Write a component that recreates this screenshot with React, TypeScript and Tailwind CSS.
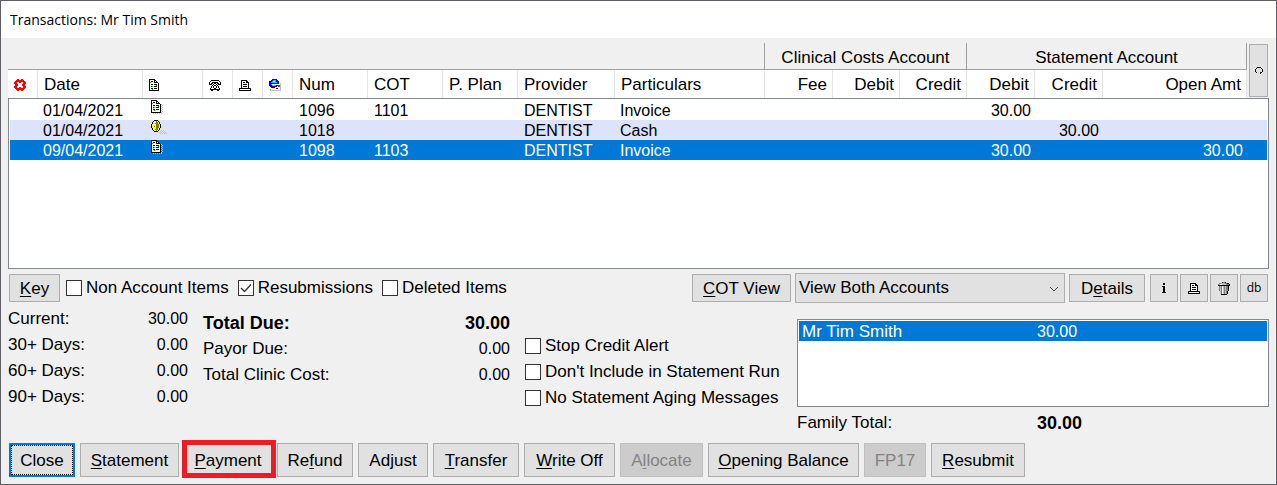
import type { ReactNode } from "react";

const palette: Record<string, string> = {
  k: "#000000",
  w: "#ffffff",
  g: "#00c000",
  s: "#c0c0c0",
  d: "#808080",
  r: "#ff0000",
  y: "#ffff00",
  o: "#808000",
  b: "#0000ff",
  n: "#000080",
  c: "#00c8ff"
};

const pixels = {
  cancel: [
    "...rr..rr...",
    "..rrrrrrrr..",
    ".rrrrrrrrrr.",
    "rrrwwrrwwrrr",
    "rrrwwwwwwrrr",
    ".rrrwwwwrrr.",
    ".rrrwwwwrrr.",
    "rrrwwwwwwrrr",
    "rrrwwrrwwrrr",
    ".rrrrrrrrrr.",
    "..rrrrrrrr..",
    "...rr..rr..."
  ],
  heading: [
    "kkkkkk....",
    "kwwwwkk...",
    "kwkkwkwk..",
    "kgwwwkkkk.",
    "kwwwwwwwwk",
    "kwkkwkkkwk",
    "kwwwwwwgwk",
    "kwkgwkkkwk",
    "kwwwwwwwwk",
    "kwkkwkkkwk",
    "kwwgwwwwwk",
    "kkkkkkkkkk"
  ],
  document: [
    "kkkkkk......",
    "kwwwwkk.....",
    "kwkkwkwk....",
    "kgwwwkkkk...",
    "kwwwwwwwwks.",
    "kwkkwkkkwk.s",
    "kwwwwwwgwks.",
    "kwkgwkkkwk.s",
    "kwwwwwwwwks.",
    "kwkkwkkkwk.s",
    "kwwgwwwwwks.",
    "kwwwwwwwwk.s",
    "kkkkkkkkkks.",
    "..s.s.s.s.s."
  ],
  coin: [
    "...kkkk.........",
    "..kyyoyk........",
    ".kywyooyk.......",
    ".kyyoooyk.......",
    "kyywyoooyk......",
    "kyyyyoooyk......",
    "kyyoyoooyk......",
    "kyyyyoooyk......",
    ".kyyyooyk.......",
    ".kyyoooyk.......",
    "..kyyoyk..s.s...",
    "...kkkk..s.s.s..",
    "........s.s.s.s.",
    ".........s.s.s.s"
  ],
  phone: [
    "..kkkkkkkk..",
    ".kwwwwwwwwk.",
    "kwwkkkkkkwwk",
    "kwkkwkkwkkwk",
    "kkk.kwwk.kkk",
    "...kwkkwk...",
    "..kwkwwkwk..",
    "..kwkwwkwk..",
    ".kwwwkkwwwk.",
    ".kkkkkkkkkk.",
    "..kk....kk.."
  ],
  printer: [
    "..kkkkkk....",
    "..kwwwwkk...",
    "..kwkkwkkk..",
    "..kwwwwwwk..",
    "..kwkkkkwk..",
    "..kwwwwwwk..",
    "..kwkkkkwk..",
    "..kwwwwwwk..",
    "kkkkkkkkkkkk",
    "kwwwwwwwwwwk",
    "kkkkkkkkkkkk"
  ],
  web: [
    "...bbbbb....",
    "..bbcccbb...",
    "nbbc..cbbn..",
    "bbccccccbb..",
    "bbbbbbbbbbws",
    "bbc.wwwwwwws",
    "nbbc.ccbbrrs",
    ".nbbbbbbwrrs",
    "..nnnnwwwwws",
    "..wyyywbbwws",
    ".cwwwwwwwwws",
    ".sssssssssss"
  ],
  info: [
    "..kk..",
    "..kk..",
    "......",
    ".kkk..",
    "..kk..",
    "..kk..",
    "..kk..",
    "..kk..",
    "..kk..",
    ".kkkk."
  ],
  bin: [
    "....kddk....",
    ".ddssssddkk.",
    "dswwssssdddk",
    "kkkkkkkkkkkk",
    ".dsdwsdsddk.",
    ".dsdwsdsddk.",
    ".dsdwsdsddk.",
    ".dsdwsdsddk.",
    ".dsdwsdsddk.",
    "..sdwsdsdk..",
    "..sdwsdsdk..",
    "..sdwsdsdk..",
    "...kkkkkk..."
  ],
  refresh: ["..kkkk..", ".k....k.", "k......k", "k......k", "k......k", ".k...kk.", ".....k.."]
};

function PixelIcon({ name }: { name: keyof typeof pixels }) {
  const rows = pixels[name];
  return (
    <svg width={rows[0].length} height={rows.length} shapeRendering="crispEdges" aria-hidden="true" className="block">
      {rows.flatMap((row, y) =>
        row.split("").map((p, x) =>
          p === "." ? null : <rect key={`${x}-${y}`} x={x} y={y} width="1" height="1" fill={palette[p]} />
        )
      )}
    </svg>
  );
}

// "&" marks the letter that is the keyboard shortcut
function Label({ text }: { text: string }) {
  const at = text.indexOf("&");
  return (
    <span className="pt-0.5">
      {at < 0 ? (
        text
      ) : (
        <>
          {text.slice(0, at)}
          <span className="underline decoration-1 underline-offset-2">{text[at + 1]}</span>
          {text.slice(at + 2)}
        </>
      )}
    </span>
  );
}

function Button({
  label,
  width,
  height = "h-7",
  state = "normal",
  title,
  children
}: {
  label?: string;
  width: string;
  height?: string;
  state?: "normal" | "default" | "disabled";
  title?: string;
  children?: ReactNode;
}) {
  const look = {
    normal: "border border-[#adadad] bg-[#e1e1e1]",
    default: "border-2 border-[#0078d7] bg-[#e1e1e1] outline-1 -outline-offset-3 outline-dotted outline-black",
    disabled: "border border-[#bfbfbf] bg-[#cccccc] text-[#838383]"
  }[state];
  return (
    <button
      type="button"
      disabled={state === "disabled"}
      aria-label={title}
      className={`flex shrink-0 items-center justify-center whitespace-nowrap ${width} ${height} ${look}`}
    >
      {label ? <Label text={label} /> : children}
    </button>
  );
}

function CheckBox({ label, checked = false }: { label: string; checked?: boolean }) {
  return (
    <label className="flex items-center gap-1 whitespace-nowrap">
      <span className="relative block size-4">
        <input
          type="checkbox"
          defaultChecked={checked}
          className="peer block size-4 appearance-none border border-[#333333] bg-white"
        />
        <svg
          viewBox="0 0 16 16"
          className="pointer-events-none absolute inset-0 hidden size-4 peer-checked:block"
          fill="none"
          stroke="#333333"
          strokeWidth="1.3"
        >
          <path d="M3 8l3.5 3.5L13 4.5" />
        </svg>
      </span>
      {label}
    </label>
  );
}

function Columns({ first, last }: { first: string; last: string }) {
  return (
    <colgroup>
      <col className={first} />
      <col className="w-[105px]" />
      <col className="w-[60px]" />
      <col className="w-[30px]" />
      <col className="w-[30px]" />
      <col className="w-[30px]" />
      <col className="w-[75px]" />
      <col className="w-[75px]" />
      <col className="w-[75px]" />
      <col className="w-[97px]" />
      <col />
      <col className="w-[68px]" />
      <col className="w-[67px]" />
      <col className="w-[67px]" />
      <col className="w-[68px]" />
      <col className="w-[68px]" />
      <col className="w-[144px]" />
      <col className={last} />
    </colgroup>
  );
}

const headings: Array<{ text?: string; icon?: keyof typeof pixels; right?: boolean }> = [
  { icon: "cancel" },
  { text: "Date" },
  { icon: "heading" },
  { icon: "phone" },
  { icon: "printer" },
  { icon: "web" },
  { text: "Num" },
  { text: "COT" },
  { text: "P. Plan" },
  { text: "Provider" },
  { text: "Particulars" },
  { text: "Fee", right: true },
  { text: "Debit", right: true },
  { text: "Credit", right: true },
  { text: "Debit", right: true },
  { text: "Credit", right: true },
  { text: "Open Amt", right: true }
];

const transactions: Array<{
  date: string;
  icon: keyof typeof pixels;
  num: string;
  cot: string;
  particulars: string;
  debit: string;
  credit: string;
  open: string;
  look: string;
}> = [
  { date: "01/04/2021", icon: "document", num: "1096", cot: "1101", particulars: "Invoice", debit: "30.00", credit: "", open: "", look: "" },
  { date: "01/04/2021", icon: "coin", num: "1018", cot: "", particulars: "Cash", debit: "", credit: "30.00", open: "", look: "bg-[#dce3fb]" },
  { date: "09/04/2021", icon: "document", num: "1098", cot: "1103", particulars: "Invoice", debit: "30.00", credit: "", open: "30.00", look: "bg-[#0078d7] text-white" }
];

function HeaderTable() {
  return (
    <table className="w-full table-fixed border-separate border-spacing-0">
      <Columns first="w-[30px]" last="w-[22px]" />
      <thead>
        <tr className="h-[27px]">
          <td colSpan={11} className="border-r border-b border-[#a0a0a0] p-0" />
          <th colSpan={3} className="border-r border-b border-[#a0a0a0] p-0 pt-1 font-normal">
            Clinical Costs Account
          </th>
          <th colSpan={3} className="border-r border-b border-[#a0a0a0] p-0 pt-1 font-normal">
            Statement Account
          </th>
          <td rowSpan={2} className="p-0 pl-0.5 align-bottom">
            <button
              type="button"
              aria-label="Refresh"
              className="mb-px flex h-[53px] w-[19px] items-center justify-center border border-[#adadad] bg-[#e1e1e1]"
            >
              <PixelIcon name="refresh" />
            </button>
          </td>
        </tr>
        <tr className="h-7">
          {headings.map(({ text, icon, right }, i) => (
            <th
              key={i}
              className={`border-r border-[#e5e5e5] bg-white p-0 pt-0.5 font-normal ${right ? "pr-[5px] text-right" : "pl-1.5 text-left"}`}
            >
              {icon ? <PixelIcon name={icon} /> : text}
            </th>
          ))}
        </tr>
      </thead>
    </table>
  );
}

function TransactionList() {
  return (
    <div className="h-[171px] border border-[#828790] bg-white p-px">
      <table className="w-full table-fixed border-separate border-spacing-0 text-base/4">
        <Columns first="w-7" last="w-5" />
        <tbody>
          {transactions.map((t) => (
            <tr key={t.num} className={`h-5 ${t.look}`}>
              <td className="p-0" />
              <td className="p-0 pt-0.5 pl-[5px]">{t.date}</td>
              <td className="p-0 pl-2 align-top">
                <PixelIcon name={t.icon} />
              </td>
              <td className="p-0" colSpan={3} />
              <td className="p-0 pt-0.5 pl-1.5">{t.num}</td>
              <td className="p-0 pt-0.5 pl-1.5">{t.cot}</td>
              <td className="p-0" />
              <td className="p-0 pt-0.5 pl-1.5">DENTIST</td>
              <td className="p-0 pt-0.5 pl-[5px]">{t.particulars}</td>
              <td className="p-0" colSpan={3} />
              <td className="p-0 pt-0.5 pr-1 text-right">{t.debit}</td>
              <td className="p-0 pt-0.5 pr-1 text-right">{t.credit}</td>
              <td className="p-0 pt-0.5 pr-1 text-right">{t.open}</td>
              <td className="p-0" />
            </tr>
          ))}
        </tbody>
      </table>
    </div>
  );
}

function Amounts({ rows, className }: { rows: Array<[string, string]>; className: string }) {
  return (
    <dl className={className}>
      {rows.map(([name, amount]) => {
        const total = name === "Total Due:";
        return (
          <div key={name} className={`flex h-[26px] items-center justify-between pt-0.5 ${total ? "text-lg/5 font-bold" : ""}`}>
            <dt>{name}</dt>
            <dd className={total ? "" : "text-base"}>{amount}</dd>
          </div>
        );
      })}
    </dl>
  );
}

export default function App() {
  return (
    <div className="flex min-h-screen flex-col border border-[#5f5f66] bg-[#f0f0f0] font-['Liberation_Sans',Arial,sans-serif] text-[17px]/5 text-black">
      <header className="flex h-[37px] items-center bg-white pl-[9px]">
        <h1 className="font-['Open_Sans','Noto_Sans',sans-serif] text-sm">Transactions: Mr Tim Smith</h1>
      </header>

      <main className="flex flex-col px-[7px] pt-[5px]">
        <HeaderTable />
        <TransactionList />

        <div className="mt-1 flex h-[30px] items-center px-px">
          <div className="flex items-center">
            <Button label="&Key" width="w-[51px]" />
            <div className="ml-1.5 flex gap-[9px]">
              <CheckBox label="Non Account Items" />
              <CheckBox label="Resubmissions" checked />
              <CheckBox label="Deleted Items" />
            </div>
          </div>
          <div className="ml-auto flex items-center gap-1">
            <Button label="&COT View" width="w-[99px]" />
            <span className="relative block">
              <select
                aria-label="Accounts shown"
                className="block h-[30px] w-[270px] appearance-none border border-[#adadad] bg-[#e1e1e1] pl-[3px]"
              >
                <option>View Both Accounts</option>
              </select>
              <svg
                className="pointer-events-none absolute top-3 right-1.5 h-2 w-2.5"
                viewBox="0 0 10 8"
                fill="none"
                stroke="#444444"
              >
                <path d="M1 2l4 4 4-4" />
              </svg>
            </span>
            <Button label="D&etails" width="w-[76px]" />
            <div className="ml-px flex gap-0.5">
              <Button width="w-7" title="Information">
                <PixelIcon name="info" />
              </Button>
              <Button width="w-7" title="Print">
                <PixelIcon name="printer" />
              </Button>
              <Button width="w-7" title="Delete">
                <PixelIcon name="bin" />
              </Button>
              <Button width="w-7">
                <span className="font-['Open_Sans',sans-serif] text-xs">db</span>
              </Button>
            </div>
          </div>
        </div>

        <div className="mt-0.5 flex items-start">
          <Amounts
            className="w-[180px]"
            rows={[
              ["Current:", "30.00"],
              ["30+ Days:", "0.00"],
              ["60+ Days:", "0.00"],
              ["90+ Days:", "0.00"]
            ]}
          />
          <Amounts
            className="mt-1 ml-[15px] w-[307px]"
            rows={[
              ["Total Due:", "30.00"],
              ["Payor Due:", "0.00"],
              ["Total Clinic Cost:", "0.00"]
            ]}
          />
          <div className="mt-[31px] ml-[15px] flex flex-col gap-1.5">
            <CheckBox label="Stop Credit Alert" />
            <CheckBox label="Don't Include in Statement Run" />
            <CheckBox label="No Statement Aging Messages" />
          </div>
          <div className="mt-3.5 ml-auto w-[472px]">
            <ul className="h-[88px] border border-[#828790] bg-white p-px">
              <li className="flex h-5 items-center bg-[#0078d7] pt-0.5 pl-[3px] text-white">
                <span className="w-[235px]">Mr Tim Smith</span>
                <span className="text-base">30.00</span>
              </li>
            </ul>
            <div className="mt-1 flex h-6 items-center">
              <span className="w-[240px]">Family Total:</span>
              <b className="text-lg/5">30.00</b>
            </div>
          </div>
        </div>

        <div className="mt-2 flex gap-[5px] pl-px">
          <Button label="Close" width="w-[66px]" height="h-[34px]" state="default" />
          <Button label="&Statement" width="w-[99px]" height="h-[34px]" />
          <div className="relative">
            <Button label="&Payment" width="w-[88px]" height="h-[34px]" />
            <span className="pointer-events-none absolute -top-[3px] -right-1 -bottom-px -left-0.5 border-5 border-[#ed1c24]" />
          </div>
          <Button label="Re&fund" width="w-[76px]" height="h-[34px]" />
          <Button label="Ad&just" width="w-[70px]" height="h-[34px]" />
          <Button label="&Transfer" width="w-[86px]" height="h-[34px]" />
          <Button label="&Write Off" width="w-[91px]" height="h-[34px]" />
          <Button label="A&llocate" width="w-[83px]" height="h-[34px]" state="disabled" />
          <Button label="&Opening Balance" width="w-[151px]" height="h-[34px]" />
          <Button label="FP17" width="w-[62px]" height="h-[34px]" state="disabled" />
          <Button label="&Resubmit" width="w-[94px]" height="h-[34px]" />
        </div>
      </main>
    </div>
  );
}
